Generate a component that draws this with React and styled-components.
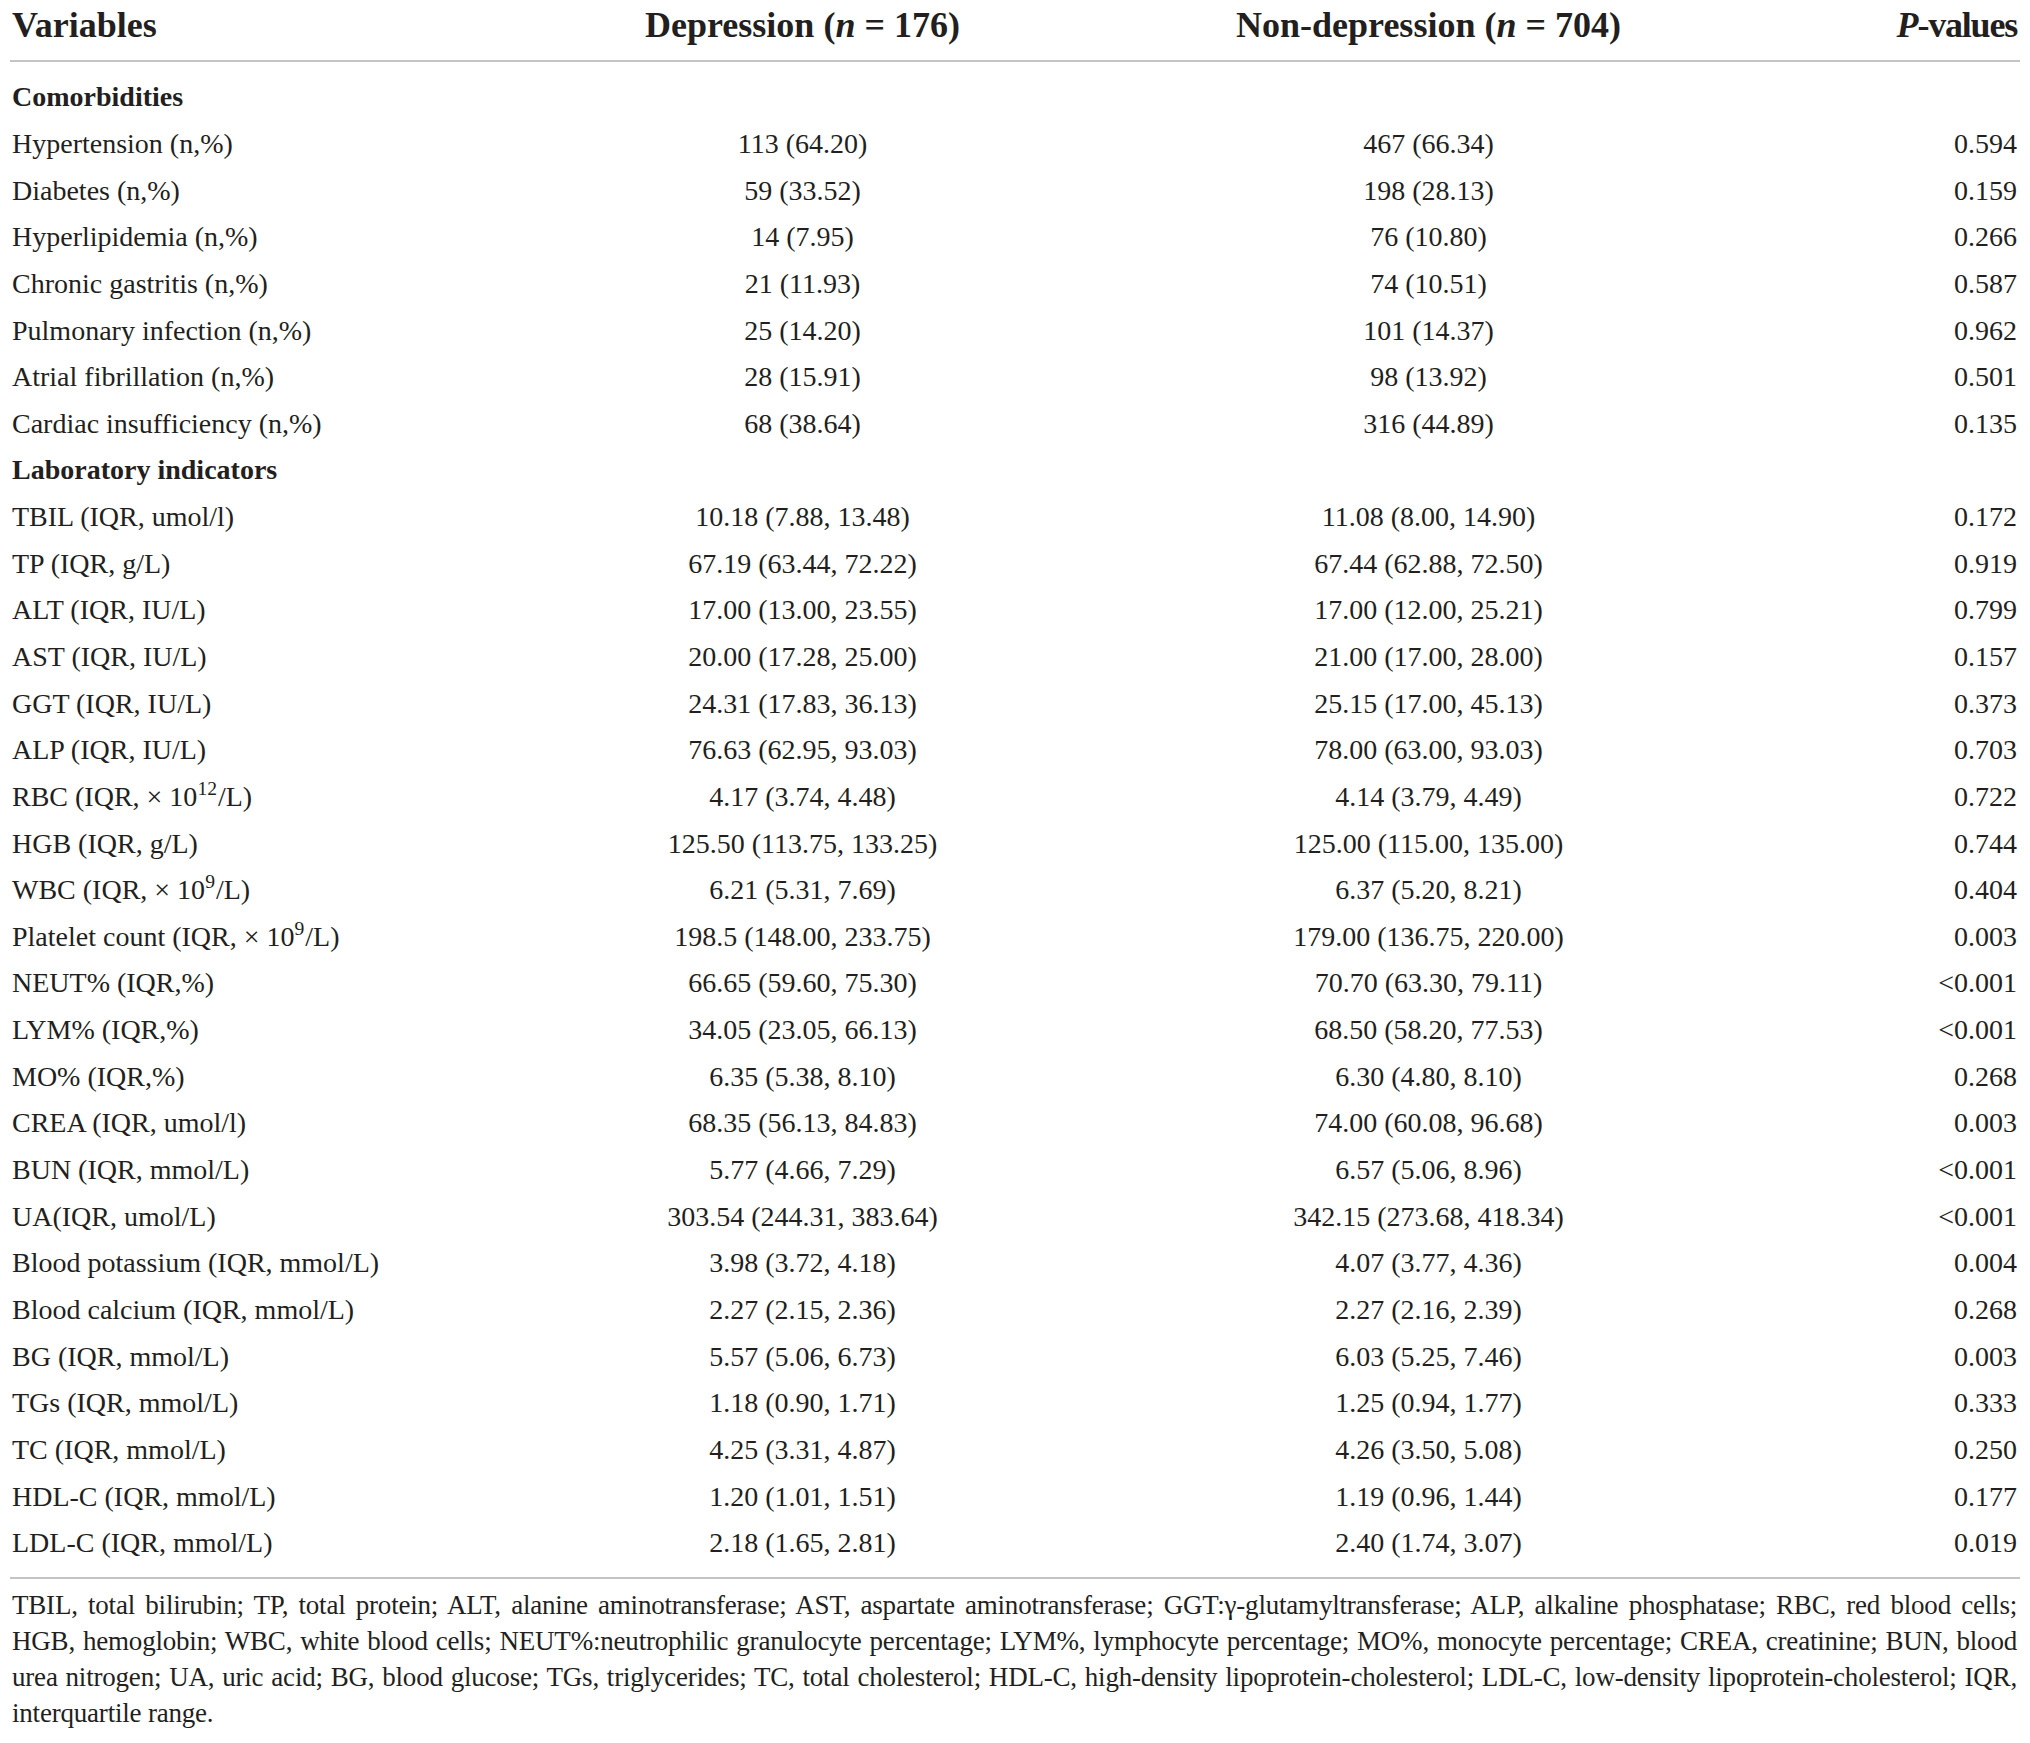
import React from "react";
import styled, { createGlobalStyle } from "styled-components";

const GlobalStyle = createGlobalStyle`
  html, body {
    margin: 0;
    padding: 0;
    background: #fff;
  }
  body {
    font-family: "Liberation Serif", "Times New Roman", serif;
    color: #231f20;
  }
`;

const cols = "490px 606px 646px 268px";

const Page = styled.div`
  width: 2010px;
  margin: 0 10px;
`;

const HeadRow = styled.div`
  display: grid;
  grid-template-columns: ${cols};
  align-items: center;
  height: 50px;
  padding-bottom: 10px;
  border-bottom: 2px solid #c4c4c4;
`;

const HeadCell = styled.div`
  font-size: 36px;
  font-weight: 700;
  text-align: ${(p) => p.$align || "left"};
  letter-spacing: ${(p) => p.$tight ? "-1.2px" : "0"};
  padding: 0 3px 0 2px;
  white-space: nowrap;

  i {
    font-style: italic;
  }
`;

const Body = styled.div`
  padding: 12px 0 10px;
  border-bottom: 2px solid #c4c4c4;
`;

const Row = styled.div`
  display: grid;
  grid-template-columns: ${cols};
  align-items: center;
  height: 46.65px;
`;

const SectionRow = styled.div`
  display: flex;
  align-items: center;
  height: 46.65px;
  padding-left: 2px;
  font-size: 28px;
  font-weight: 700;
`;

const Cell = styled.div`
  font-size: 28px;
  text-align: ${(p) => p.$align || "left"};
  padding: 0 3px 0 2px;
  white-space: nowrap;
`;

const Sup = styled.sup`
  font-size: 0.7em;
  line-height: 0;
  vertical-align: 0.55em;
  margin-right: 1px;
`;

const Footnote = styled.div`
  padding: 8px 3px 0 2px;
`;

const FootLine = styled.div`
  font-size: 27px;
  letter-spacing: -0.2px;
  line-height: 36.25px;
  white-space: nowrap;
  text-align: justify;
  text-align-last: ${(p) => (p.$last ? "left" : "justify")};
`;

const sections = [
  {
    title: "Comorbidities",
    rows: [
      ["Hypertension (n,%)", "113 (64.20)", "467 (66.34)", "0.594"],
      ["Diabetes (n,%)", "59 (33.52)", "198 (28.13)", "0.159"],
      ["Hyperlipidemia (n,%)", "14 (7.95)", "76 (10.80)", "0.266"],
      ["Chronic gastritis (n,%)", "21 (11.93)", "74 (10.51)", "0.587"],
      ["Pulmonary infection (n,%)", "25 (14.20)", "101 (14.37)", "0.962"],
      ["Atrial fibrillation (n,%)", "28 (15.91)", "98 (13.92)", "0.501"],
      ["Cardiac insufficiency (n,%)", "68 (38.64)", "316 (44.89)", "0.135"],
    ],
  },
  {
    title: "Laboratory indicators",
    rows: [
      ["TBIL (IQR, umol/l)", "10.18 (7.88, 13.48)", "11.08 (8.00, 14.90)", "0.172"],
      ["TP (IQR, g/L)", "67.19 (63.44, 72.22)", "67.44 (62.88, 72.50)", "0.919"],
      ["ALT (IQR, IU/L)", "17.00 (13.00, 23.55)", "17.00 (12.00, 25.21)", "0.799"],
      ["AST (IQR, IU/L)", "20.00 (17.28, 25.00)", "21.00 (17.00, 28.00)", "0.157"],
      ["GGT (IQR, IU/L)", "24.31 (17.83, 36.13)", "25.15 (17.00, 45.13)", "0.373"],
      ["ALP (IQR, IU/L)", "76.63 (62.95, 93.03)", "78.00 (63.00, 93.03)", "0.703"],
      [<>RBC (IQR, × 10<Sup>12</Sup>/L)</>, "4.17 (3.74, 4.48)", "4.14 (3.79, 4.49)", "0.722"],
      ["HGB (IQR, g/L)", "125.50 (113.75, 133.25)", "125.00 (115.00, 135.00)", "0.744"],
      [<>WBC (IQR, × 10<Sup>9</Sup>/L)</>, "6.21 (5.31, 7.69)", "6.37 (5.20, 8.21)", "0.404"],
      [<>Platelet count (IQR, × 10<Sup>9</Sup>/L)</>, "198.5 (148.00, 233.75)", "179.00 (136.75, 220.00)", "0.003"],
      ["NEUT% (IQR,%)", "66.65 (59.60, 75.30)", "70.70 (63.30, 79.11)", "<0.001"],
      ["LYM% (IQR,%)", "34.05 (23.05, 66.13)", "68.50 (58.20, 77.53)", "<0.001"],
      ["MO% (IQR,%)", "6.35 (5.38, 8.10)", "6.30 (4.80, 8.10)", "0.268"],
      ["CREA (IQR, umol/l)", "68.35 (56.13, 84.83)", "74.00 (60.08, 96.68)", "0.003"],
      ["BUN (IQR, mmol/L)", "5.77 (4.66, 7.29)", "6.57 (5.06, 8.96)", "<0.001"],
      ["UA(IQR, umol/L)", "303.54 (244.31, 383.64)", "342.15 (273.68, 418.34)", "<0.001"],
      ["Blood potassium (IQR, mmol/L)", "3.98 (3.72, 4.18)", "4.07 (3.77, 4.36)", "0.004"],
      ["Blood calcium (IQR, mmol/L)", "2.27 (2.15, 2.36)", "2.27 (2.16, 2.39)", "0.268"],
      ["BG (IQR, mmol/L)", "5.57 (5.06, 6.73)", "6.03 (5.25, 7.46)", "0.003"],
      ["TGs (IQR, mmol/L)", "1.18 (0.90, 1.71)", "1.25 (0.94, 1.77)", "0.333"],
      ["TC (IQR, mmol/L)", "4.25 (3.31, 4.87)", "4.26 (3.50, 5.08)", "0.250"],
      ["HDL-C (IQR, mmol/L)", "1.20 (1.01, 1.51)", "1.19 (0.96, 1.44)", "0.177"],
      ["LDL-C (IQR, mmol/L)", "2.18 (1.65, 2.81)", "2.40 (1.74, 3.07)", "0.019"],
    ],
  },
];

const footnoteLines = [
  "TBIL, total bilirubin; TP, total protein; ALT, alanine aminotransferase; AST, aspartate aminotransferase; GGT:γ-glutamyltransferase; ALP, alkaline phosphatase; RBC, red blood cells;",
  "HGB, hemoglobin; WBC, white blood cells; NEUT%:neutrophilic granulocyte percentage; LYM%, lymphocyte percentage; MO%, monocyte percentage; CREA, creatinine; BUN, blood",
  "urea nitrogen; UA, uric acid; BG, blood glucose; TGs, triglycerides; TC, total cholesterol; HDL-C, high-density lipoprotein-cholesterol; LDL-C, low-density lipoprotein-cholesterol; IQR,",
  "interquartile range.",
];

export default function App() {
  return (
    <>
      <GlobalStyle />
      <Page>
        <HeadRow>
          <HeadCell>Variables</HeadCell>
          <HeadCell $align="center">
            Depression (<i>n</i> = 176)
          </HeadCell>
          <HeadCell $align="center">
            Non-depression (<i>n</i> = 704)
          </HeadCell>
          <HeadCell $align="right" $tight>
            <i>P</i>-values
          </HeadCell>
        </HeadRow>

        <Body>
          {sections.map((section) => (
            <React.Fragment key={section.title}>
              <SectionRow>{section.title}</SectionRow>
              {section.rows.map((row, i) => (
                <Row key={i}>
                  <Cell>{row[0]}</Cell>
                  <Cell $align="center">{row[1]}</Cell>
                  <Cell $align="center">{row[2]}</Cell>
                  <Cell $align="right">{row[3]}</Cell>
                </Row>
              ))}
            </React.Fragment>
          ))}
        </Body>

        <Footnote>
          {footnoteLines.map((line, i) => (
            <FootLine key={i} $last={i === footnoteLines.length - 1}>
              {line}
            </FootLine>
          ))}
        </Footnote>
      </Page>
    </>
  );
}
